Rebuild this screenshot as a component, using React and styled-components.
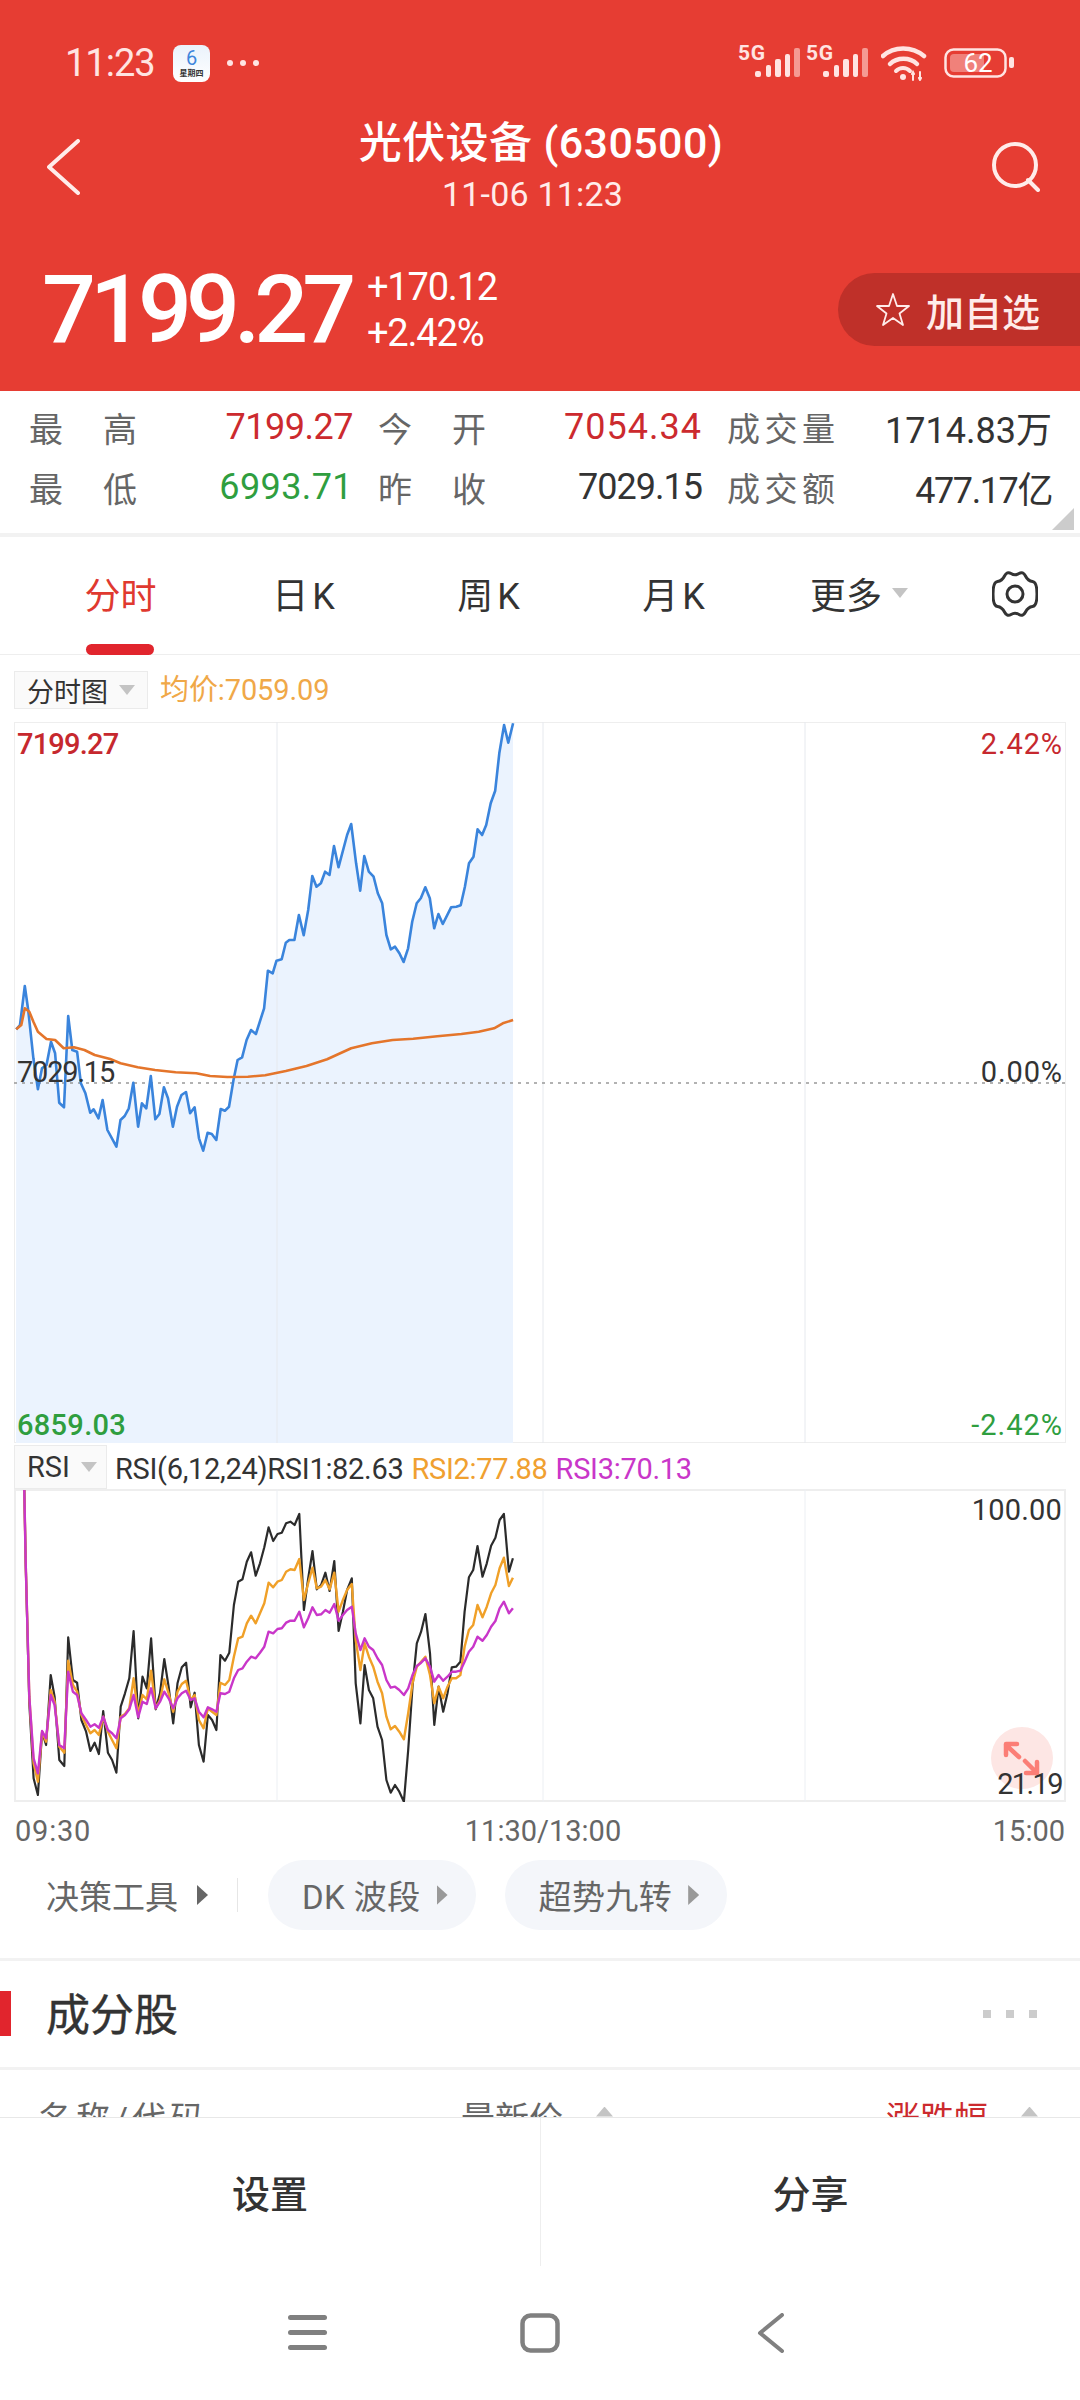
import React from "react";
import styled, { createGlobalStyle } from "styled-components";

const Global = createGlobalStyle`
  html, body { margin: 0; padding: 0; background: #fff; }
  body { font-family: Roboto, "Noto Sans CJK SC", sans-serif; }
  * { box-sizing: border-box; }
`;

const Page = styled.div`
  width: 1080px; height: 2400px; display: flex; flex-direction: column; overflow: hidden; background: #fff; color: #333;
`;
const Scroll = styled.div`height: 2117px; overflow: hidden; flex: none;`;

/* header */
const Header = styled.header`height: 391px; background: #e63d33; color: #fff; display: flex; flex-direction: column;`;
const StatusBar = styled.div`height: 120px; padding: 6px 0 0 65px; display: flex; align-items: center; position: relative;`;
const Clock = styled.span`font-size: 38px; color: #ffe4e2; width: 108px; letter-spacing: -1px;`;
const CalBadge = styled.div`
  width: 37px; height: 37px; border-radius: 8px; background: linear-gradient(#eaf2fb, #fff); display: flex; flex-direction: column; align-items: center;
  margin-right: 17px; margin-top: 1px;
`;
const CalDay = styled.span`font-size: 20px; line-height: 22px; color: #3f86dc; margin-top: 2px;`;
const CalWeek = styled.span`font-size: 8px; line-height: 9px; color: #333; font-weight: 700;`;
const MoreDots = styled.div`display: flex; gap: 7px;`;
const Dot = styled.i`width: 6px; height: 6px; border-radius: 50%; background: #ffe4e2;`;
const StatusRight = styled.div`margin-left: auto; margin-right: 65px; display: flex; align-items: center; margin-top: 0;`;

const NavBar = styled.div`height: 96px; display: grid; grid-template-columns: 1fr auto 1fr; padding: 0 40px 0 47px; align-items: start;`;
const BackBtn = styled.div`margin-top: 19px; display: flex;`;
const SearchBtn = styled.div`margin-top: 22px; display: flex; justify-content: flex-end;`;
const TitleBlock = styled.div`text-align: center; margin-left: -5px;`;
const Title = styled.div`font-size: 43px; line-height: 46px; font-weight: 500; letter-spacing: .4px; white-space: pre;`;
const SubTitle = styled.div`font-size: 34px; line-height: 41px; margin: 8px 0 0 -17px; color: #ffecea; letter-spacing: .2px;`;

const PriceRow = styled.div`flex: 1; padding: 57px 0 0 42px; display: flex; align-items: flex-start;`;
const Price = styled.div`font-size: 95px; line-height: 73px; font-weight: 500; letter-spacing: -6px; width: 325px; flex: none;`;
const Change = styled.div`margin-top: -9px; font-size: 38px; line-height: 46px; letter-spacing: -1.2px; color: #fff;`;
const AddBtn = styled.div`
  margin-left: auto; width: 242px; height: 73px; background: #bf3029; border-radius: 37px 0 0 37px;
  display: flex; align-items: center; padding-left: 37px; gap: 15px; font-size: 38px; color: #ffecea; font-weight: 500;
`;

/* stats */
const Stats = styled.section`
  height: 142px; padding: 6px 0 0 29px; display: grid; grid-template-columns: 324px 324px 325px; column-gap: 25px; grid-auto-rows: 60px; position: relative;
`;
const StatCell = styled.div`display: flex; justify-content: space-between; align-items: center;`;
const StatLabel = styled.span`font-size: ${p => (p.$wide ? 33 : 34)}px; color: #666; width: 108px; text-align-last: justify;`;
const StatValue = styled.span`font-size: 36px; letter-spacing: ${p => p.$ls}px; color: ${p => p.$c || "#333"};`;
const Corner = styled.i`
  position: absolute; right: 6px; bottom: 3px; width: 22px; height: 22px; background: #ccc; clip-path: polygon(100% 0, 100% 100%, 0 100%);
`;
const Rule = styled.div`height: ${p => p.$h || 4}px; background: #f2f2f2; flex: none;`;

/* tabs */
const Tabs = styled.nav`height: 118px; padding-left: 28px; display: grid; grid-template-columns: repeat(4, 185px) 182px 1fr; border-bottom: 1px solid #eee;`;
const Tab = styled.div`
  position: relative; display: flex; align-items: center; justify-content: center; gap: 10px; font-size: 36px; padding-bottom: 6px;
  color: ${p => (p.$on ? "#e0392f" : "#333")}; height: 118px;
  & > span { letter-spacing: ${p => (p.$k ? "4px" : "0")}; }
  &::after {
    content: ""; display: ${p => (p.$on ? "block" : "none")}; position: absolute; left: 58px; bottom: 0; width: 68px; height: 11px; background: #e1252d; border-radius: 6px;
  }
`;
const GearCell = styled(Tab)`padding-bottom: 4px;`;
const Tri = styled.i`
  display: inline-block; flex: none; width: ${p => p.$w || 16}px; height: ${p => p.$h || 10}px; background: ${p => p.$c || "#c4c4c4"};
  clip-path: ${p => p.$up ? "polygon(50% 0, 100% 100%, 0 100%)" : p.$right ? "polygon(0 0, 100% 50%, 0 100%)" : "polygon(0 0, 100% 0, 50% 100%)"};
`;

/* charts */
const ChartHead = styled.div`height: 67px; padding: 16px 14px 0; display: flex; align-items: flex-start; gap: 12px;`;
const Drop = styled.div`
  height: ${p => p.$h || 38}px; width: ${p => p.$w}px; background: #fafafa; border: 1px solid #ebebeb; display: flex; align-items: center; gap: 11px; padding-left: 12px; font-size: ${p => p.$fs || 27}px; color: #333;
`;
const AvgText = styled.span`font-size: 29px; line-height: 38px; color: #f0a848; letter-spacing: -.1px;`;
const Frame = styled.div`
  position: relative; margin: 0 14px; width: 1052px; height: ${p => p.$h}px; border: ${p => p.$bw || 1}px solid #eee; 
  & > svg { position: absolute; left: ${p => -(p.$bw || 1)}px; top: ${p => -(p.$bw || 1)}px; }
`;
const Tag = styled.span`
  position: absolute; font-size: 29px; line-height: 32px; color: ${p => p.$c || "#333"}; font-weight: ${p => p.$b ? 500 : 400};
  ${p => (p.$right ? "right: 2px;" : "left: 2px;")} top: ${p => p.$y}px;
  letter-spacing: ${p => p.$ls ?? 0.2}px;
`;
const RsiHead = styled.div`height: 46px; padding: 2px 14px 0; display: flex; align-items: center; gap: 8px;`;
const RsiText = styled.span`font-size: 29px; color: ${p => p.$c || "#333"}; margin: 4px 0 0; white-space: pre; letter-spacing: -.3px;`;
const Expand = styled.div`
  position: absolute; right: 11px; bottom: 11px; width: 62px; height: 62px; border-radius: 50%; background: #fde6e4; display: flex;
`;
const TimeAxis = styled.div`height: 58px; padding: 0 15px; display: flex; justify-content: space-between; align-items: center; font-size: 29px; color: #666;
  & > span:first-child { letter-spacing: .8px; }
  & > span:nth-child(2) { margin-left: 2px; }
`;

/* tools */
const Tools = styled.div`height: 70px; padding-left: 46px; display: flex; align-items: center;`;
const ToolLabel = styled.span`font-size: 33px; color: #666; display: flex; align-items: center; gap: 19px;`;
const Split = styled.i`width: 1px; height: 34px; background: #e6e6e6; margin: 0 30px 0 29px;`;
const Pill = styled.div`
  height: 70px; border-radius: 35px; background: #f4f6fa; display: flex; align-items: center; padding: 0 28px 0 34px; gap: 16px; font-size: 33px; color: #666; margin-right: 29px;
`;
const PillText = styled.span`letter-spacing: .4px;`;
const Gap = styled.div`height: ${p => p.$h}px;`;

/* section */
const SectionHead = styled.div`height: 106px; display: flex; align-items: center; padding: 0 43px 0 0; position: relative;`;
const RedMark = styled.i`width: 11px; height: 45px; background: #e1252d; margin-right: 35px; margin-top: -1px;`;
const SectionTitle = styled.h2`margin: -5px 0 0; font-size: 44px; font-weight: 400; color: #333; flex: 1; -webkit-text-stroke: .4px #333;`;
const Dots = styled.div`display: flex; gap: 15px;`;
const Square = styled.i`width: 8px; height: 8px; background: #ccc;`;
const TableHead = styled.div`display: flex; height: 80px; padding: 22px 42px 0 38px; font-size: 34px; color: #666; align-items: flex-start;`;
const ColName = styled.span`width: 423px; letter-spacing: 4px;`;
const ColHead = styled.span`display: flex; align-items: center; gap: 33px; width: ${p => p.$w}px; color: ${p => p.$c || "#666"};
  & > i { margin-top: -10px; }
`;

/* bottom */
const Actions = styled.div`height: 149px; display: grid; grid-template-columns: 1fr 1fr; border-top: 1px solid #e8e8e8; flex: none;`;
const Action = styled.div`
  display: flex; align-items: center; justify-content: center; font-size: 38px; font-weight: 500; color: #333; padding-bottom: 2px;
  & + & { border-left: 1px solid #eee; }
`;
const SysNav = styled.div`flex: 1; display: flex; justify-content: center; align-items: center; gap: 192px; padding-bottom: 0;`;

const pairs = `47,1108 58,1095 72,978 82,1050 97,1195 110,1288 122,1225 135,1215 148,1145 160,1180 172,1328 186,1342 198,1068 210,1170 224,1175 235,1270 248,1300 262,1358 272,1348 286,1375 298,1320 312,1410 338,1460 350,1380 362,1368 374,1345 387,1268 401,1400 412,1330 425,1345 438,1248 451,1378 463,1362 476,1282 488,1315 502,1400 514,1340 527,1305 540,1296 552,1360 565,1342 578,1435 590,1472 603,1418 615,1422 628,1440 641,1347 653,1352 665,1340 678,1260 690,1200 703,1192 716,1140 729,1110 743,1122 767,1045 778,932 792,940 803,902 818,898 830,848 840,840 855,840 868,765 882,826 895,750 907,648 919,680 932,670 944,635 957,645 970,558 983,622 1008,525 1020,492 1034,610 1046,692 1058,588 1071,635 1085,650 1097,700 1110,730 1122,825 1135,868 1147,860 1160,880 1172,906 1185,865 1197,785 1210,730 1222,715 1235,682 1248,715 1261,805 1273,762 1286,792 1310,742 1325,740 1338,736 1350,680 1362,610 1375,590 1387,508 1400,525 1412,495 1425,430 1438,392 1450,280 1464,195 1476,248 1490,190`;
const avg = `47,1108 62,1095 72,1045 85,1055 97,1085 110,1115 135,1137 160,1140 185,1165 215,1162 245,1170 275,1185 320,1197 350,1210 400,1222 450,1230 510,1237 570,1240 610,1248 660,1251 720,1250 770,1246 830,1233 890,1218 950,1198 1020,1165 1080,1150 1140,1140 1200,1136 1270,1129 1340,1122 1390,1115 1435,1105 1460,1090 1490,1080`;
const rsiX = [68,72,82,94,106,118,129,142,153,166,180,191,204,216,228,241,253,265,277,289,302,314,326,338,350,362,374,387,399,411,423,436,448,460,472,485,497,509,521,534,545,557,570,582,594,606,617,630,642,655,667,679,691,703,716,728,740,752,765,777,789,801,813,825,838,851,863,875,887,899,911,923,936,948,960,972,985,996,1009,1021,1033,1045,1057,1070,1082,1094,1106,1118,1131,1143,1155,1167,1179,1191,1204,1216,1228,1241,1253,1265,1277,1289,1301,1313,1325,1337,1351,1363,1375,1387,1399,1411,1425,1436];
const rsiA = [180,400,820,1045,1095,905,945,735,800,990,1008,622,750,758,870,905,963,938,972,843,968,990,1028,830,790,745,603,865,740,775,625,838,790,687,770,880,760,712,698,832,788,945,995,855,870,900,675,692,668,525,455,448,395,367,437,400,352,292,333,312,308,280,275,285,252,540,445,363,478,465,428,483,393,603,545,480,445,760,880,705,780,805,890,930,1050,1088,1065,1085,1115,960,770,640,605,552,670,885,770,845,790,712,710,695,545,442,420,348,440,400,347,323,270,252,425,385];
const rsiB = [180,400,800,1000,1055,905,935,780,815,950,968,692,765,785,855,885,910,900,915,860,905,930,955,860,852,835,745,855,795,808,722,835,810,748,790,845,785,762,752,810,795,870,895,835,845,855,758,765,750,680,625,620,580,557,580,550,520,458,472,455,450,425,418,420,387,510,460,413,475,470,450,478,428,545,510,480,462,630,720,640,680,710,755,790,860,898,888,905,928,850,760,710,695,680,735,820,770,805,770,745,745,735,650,600,585,525,562,530,490,465,415,383,468,443];
const rsiC = [180,400,800,985,1030,903,925,795,825,945,955,725,785,795,850,870,890,883,893,860,900,910,925,865,855,838,795,862,815,822,775,835,815,785,805,835,805,790,782,810,805,845,862,832,838,845,790,792,785,745,720,715,695,680,685,668,650,605,610,597,595,578,572,572,545,592,565,532,555,553,540,548,522,572,555,540,530,610,660,625,650,660,685,705,750,773,770,780,795,775,735,708,698,685,710,755,735,752,740,725,725,722,695,665,650,620,632,615,590,573,535,515,550,535];

const mainMap = s => s.split(" ").map(p => { const [x, y] = p.split(",").map(Number); return [+(x / 2.904).toFixed(1), +(660 + y / 3).toFixed(1)]; });
const rsiPts = ys => rsiX.map((x, i) => `${(x / 2.8).toFixed(1)},${(1430 + ys[i] / 3).toFixed(1)}`).join(" ");
const mainPts = mainMap(pairs);
const str = a => a.map(p => p.join(",")).join(" ");
const fillPts = `16,1443 ${str(mainPts)} 513,722 513,1443`;

const GRID = [277, 543, 805];

function Signal() {
  const bars = [[0, 6, 72], [11, 5, 66], [20, 6, 60], [30, 5, 55], [39, 6, 49]];
  return (
    <svg width="130" height="44" viewBox="740 40 130 44" style={{ display: "block", overflow: "visible", marginTop: "-4px" }}>
      {[0, 68].map(o => (
        <g key={o} transform={`translate(${o} 0)`}>
          <text x="740" y="61" fontSize="21" fontWeight="700" fill="#ffe4e2" fontFamily="Roboto" letterSpacing=".6">5G</text>
          {bars.map(([x, w, top], i) => (
            <rect key={x} x={757 + x} y={top} width={w} height={78 - top} rx="2" fill={i === 4 ? "#f59a93" : "#ffe4e2"} />
          ))}
        </g>
      ))}
    </svg>
  );
}
function Wifi() {
  return (
    <svg width="46" height="36" viewBox="0 0 46 36" style={{ display: "block", margin: "0 17px 0 13px" }} fill="none" stroke="#ffe4e2" strokeLinecap="round">
      <path d="M2 11 C13 1 31 1 43 11" strokeWidth="4.5" />
      <path d="M9 19 C16 12 29 12 36 19" strokeWidth="4.5" />
      <path d="M15 26 C19 22 25 22 29 26" strokeWidth="4" />
      <circle cx="22" cy="32" r="3" fill="#ffe4e2" stroke="none" />
      <path d="M32 35 V27 M31 29 l1-2 l1 2 M39 35 V27 M38 33 l1 2 l1-2" strokeWidth="2" />
    </svg>
  );
}
function Battery() {
  return (
    <svg width="71" height="30" viewBox="0 0 71 30" style={{ display: "block" }}>
      <rect x="1.5" y="1.5" width="60" height="27" rx="8" fill="none" stroke="#ffe4e2" strokeWidth="2.5" />
      <path d="M10 6 H40 V24 H10 Q6 24 6 20 V10 Q6 6 10 6Z" fill="#f0817a" />
      <rect x="65" y="9" width="5" height="11" rx="2" fill="#ffe4e2" />
      <text x="34" y="24" textAnchor="middle" fontSize="26" fill="#fff" fontFamily="Roboto">62</text>
    </svg>
  );
}

const gearCtrl = [[15, 0], [23, 5], [31, 0], [36, 10], [45, 11], [45, 35], [36, 36], [31, 46], [23, 41], [15, 46], [10, 36], [1, 35], [1, 11], [10, 10]];
const gearPath = (() => {
  const mid = (a, b) => [(a[0] + b[0]) / 2, (a[1] + b[1]) / 2];
  const n = gearCtrl.length;
  let d = `M${mid(gearCtrl[n - 1], gearCtrl[0]).join(" ")}`;
  gearCtrl.forEach((c, i) => { d += ` Q${c.join(" ")} ${mid(c, gearCtrl[(i + 1) % n]).join(" ")}`; });
  return d + "Z";
})();
const Gear = () => (
  <svg width="46" height="46" viewBox="0 0 46 46" fill="none" stroke="#333" strokeWidth="3" strokeLinejoin="round">
    <path d={gearPath} />
    <circle cx="23" cy="23" r="8" />
  </svg>
);

export default function App() {
  return (
    <Page>
      <Global />
      <Scroll>
        <Header>
          <StatusBar>
            <Clock>11:23</Clock>
            <CalBadge><CalDay>6</CalDay><CalWeek>星期四</CalWeek></CalBadge>
            <MoreDots><Dot /><Dot /><Dot /></MoreDots>
            <StatusRight><Signal /><Wifi /><Battery /></StatusRight>
          </StatusBar>
          <NavBar>
            <BackBtn>
              <svg width="33" height="56" viewBox="0 0 33 56" fill="none" stroke="#ffecea" strokeWidth="4" strokeLinecap="round" strokeLinejoin="round"><path d="M31 2 L2 28 L31 54" /></svg>
            </BackBtn>
            <TitleBlock>
              <Title>光伏设备 (630500)</Title>
              <SubTitle>11-06 11:23</SubTitle>
            </TitleBlock>
            <SearchBtn>
              <svg width="48" height="50" viewBox="0 0 48 50" fill="none" stroke="#ffecea" strokeWidth="4" strokeLinecap="round"><circle cx="23" cy="23" r="21" /><path d="M36 38 L46 48" /></svg>
            </SearchBtn>
          </NavBar>
          <PriceRow>
            <Price>7199.27</Price>
            <Change><div>+170.12</div><div>+2.42%</div></Change>
            <AddBtn>
              <svg width="36" height="36" viewBox="0 0 36 36" fill="none" stroke="#ffecea" strokeWidth="1.8" strokeLinejoin="round"><path d="M18 2 L22 14 L34 14 L24.5 21.5 L28 33 L18 26 L8 33 L11.5 21.5 L2 14 L14 14 Z" /></svg>
              <span>加自选</span>
            </AddBtn>
          </PriceRow>
        </Header>

        <Stats>
          <StatCell><StatLabel>最 高</StatLabel><StatValue $c="#cc2a2e" $ls={-0.5}>7199.27</StatValue></StatCell>
          <StatCell><StatLabel>今 开</StatLabel><StatValue $c="#cc2a2e" $ls={1}>7054.34</StatValue></StatCell>
          <StatCell><StatLabel $wide>成交量</StatLabel><StatValue $ls={0}>1714.83万</StatValue></StatCell>
          <StatCell><StatLabel>最 低</StatLabel><StatValue $c="#2f9e3f" $ls={0.4}>6993.71</StatValue></StatCell>
          <StatCell><StatLabel>昨 收</StatLabel><StatValue $ls={-1}>7029.15</StatValue></StatCell>
          <StatCell><StatLabel $wide>成交额</StatLabel><StatValue $ls={-1.4}>477.17亿</StatValue></StatCell>
          <Corner />
        </Stats>
        <Rule />

        <Tabs>
          <Tab $on><span>分时</span></Tab>
          <Tab $k><span>日K</span></Tab>
          <Tab $k><span>周K</span></Tab>
          <Tab $k><span>月K</span></Tab>
          <Tab><span>更多</span><Tri /></Tab>
          <GearCell><Gear /></GearCell>
        </Tabs>

        <ChartHead>
          <Drop $w={134}>分时图<Tri /></Drop>
          <AvgText>均价:7059.09</AvgText>
        </ChartHead>
        <Frame $h={721}>
          <svg width="1052" height="721" viewBox="14 722 1052 721">
            <polygon points={fillPts} fill="#ebf3fe" />
            {GRID.map(x => <line key={x} x1={x} x2={x} y1="722" y2="1443" stroke="#e6e9ee" strokeWidth="1" />)}
            <line x1="14" x2="1066" y1="1083" y2="1083" stroke="#999" strokeWidth="1.5" strokeDasharray="3 5" />
            <polyline points={str(mainPts)} fill="none" stroke="#3a84dc" strokeWidth="2.6" strokeLinejoin="round" />
            <polyline points={str(mainMap(avg))} fill="none" stroke="#e4752b" strokeWidth="2.6" strokeLinejoin="round" />
          </svg>
          <Tag $y={5} $c="#c6282e" $b $ls={-0.8}>7199.27</Tag>
          <Tag $y={5} $c="#c6282e" $right $ls={0.9}>2.42%</Tag>
          <Tag $y={333} $ls={-1.2}>7029.15</Tag>
          <Tag $y={333} $right $ls={0.9}>0.00%</Tag>
          <Tag $y={686} $c="#2f9e3f" $b $ls={0.3}>6859.03</Tag>
          <Tag $y={686} $c="#2f9e3f" $right $ls={1}>-2.42%</Tag>
        </Frame>

        <RsiHead>
          <Drop $w={93} $h={44} $fs={29}>RSI<Tri /></Drop>
          <RsiText>RSI(6,12,24)RSI1:82.63</RsiText>
          <RsiText $c="#f0a030">RSI2:77.88</RsiText>
          <RsiText $c="#c936c9">RSI3:70.13</RsiText>
        </RsiHead>
        <Frame $h={313} $bw={2}>
          <svg width="1052" height="313" viewBox="14 1489 1052 313">
            {GRID.map(x => <line key={x} x1={x} x2={x} y1="1489" y2="1802" stroke="#eceff3" strokeWidth="1" />)}
            <polyline points={rsiPts(rsiA)} fill="none" stroke="#2b2b2b" strokeWidth="2.2" strokeLinejoin="round" />
            <polyline points={rsiPts(rsiB)} fill="none" stroke="#f0a028" strokeWidth="2.4" strokeLinejoin="round" />
            <polyline points={rsiPts(rsiC)} fill="none" stroke="#c936c9" strokeWidth="2.4" strokeLinejoin="round" />
          </svg>
          <Expand>
            <svg width="62" height="62" viewBox="0 0 62 62" fill="none" stroke="#fb7e76" strokeWidth="4.5" strokeLinecap="round" strokeLinejoin="round">
              <path d="M15 18 L28 30 M15 28 V17 H26 M34 34 L46 46 M46 35 V46 H35" />
            </svg>
          </Expand>
          <Tag $y={3} $right>100.00</Tag>
          <Tag $y={277} $right $ls={-1.6}>21.19</Tag>
        </Frame>
        <TimeAxis><span>09:30</span><span>11:30/13:00</span><span>15:00</span></TimeAxis>

        <Tools>
          <ToolLabel>决策工具<Tri $right $w={11} $h={20} $c="#666" /></ToolLabel>
          <Split />
          <Pill><PillText>DK 波段</PillText><Tri $right $w={11} $h={20} $c="#999" /></Pill>
          <Pill><PillText>超势九转</PillText><Tri $right $w={11} $h={20} $c="#999" /></Pill>
        </Tools>
        <Gap $h={28} />
        <Rule $h={3} />
        <SectionHead>
          <RedMark />
          <SectionTitle>成分股</SectionTitle>
          <Dots><Square /><Square /><Square /></Dots>
        </SectionHead>
        <Rule $h={3} />
        <TableHead>
          <ColName>名称/代码</ColName>
          <ColHead $w={425}>最新价<Tri $up $w={17} $h={10} /></ColHead>
          <ColHead $c="#cc2a2e">涨跌幅<Tri $up $w={17} $h={10} /></ColHead>
        </TableHead>
      </Scroll>

      <Actions>
        <Action>设置</Action>
        <Action>分享</Action>
      </Actions>
      <SysNav>
        <svg width="40" height="40" viewBox="0 0 40 40" fill="#808080"><rect x="0" y="2" width="39" height="5" rx="2.5" /><rect x="0" y="17" width="39" height="5" rx="2.5" /><rect x="0" y="32" width="39" height="5" rx="2.5" /></svg>
        <svg width="40" height="40" viewBox="0 0 40 40" fill="none" stroke="#808080" strokeWidth="4.5"><rect x="2.5" y="2.5" width="35" height="35" rx="8" /></svg>
        <svg width="40" height="40" viewBox="0 0 40 40" fill="none" stroke="#808080" strokeWidth="4" strokeLinecap="round" strokeLinejoin="round"><path d="M30 2 L8 20 L30 38" /></svg>
      </SysNav>
    </Page>
  );
}
